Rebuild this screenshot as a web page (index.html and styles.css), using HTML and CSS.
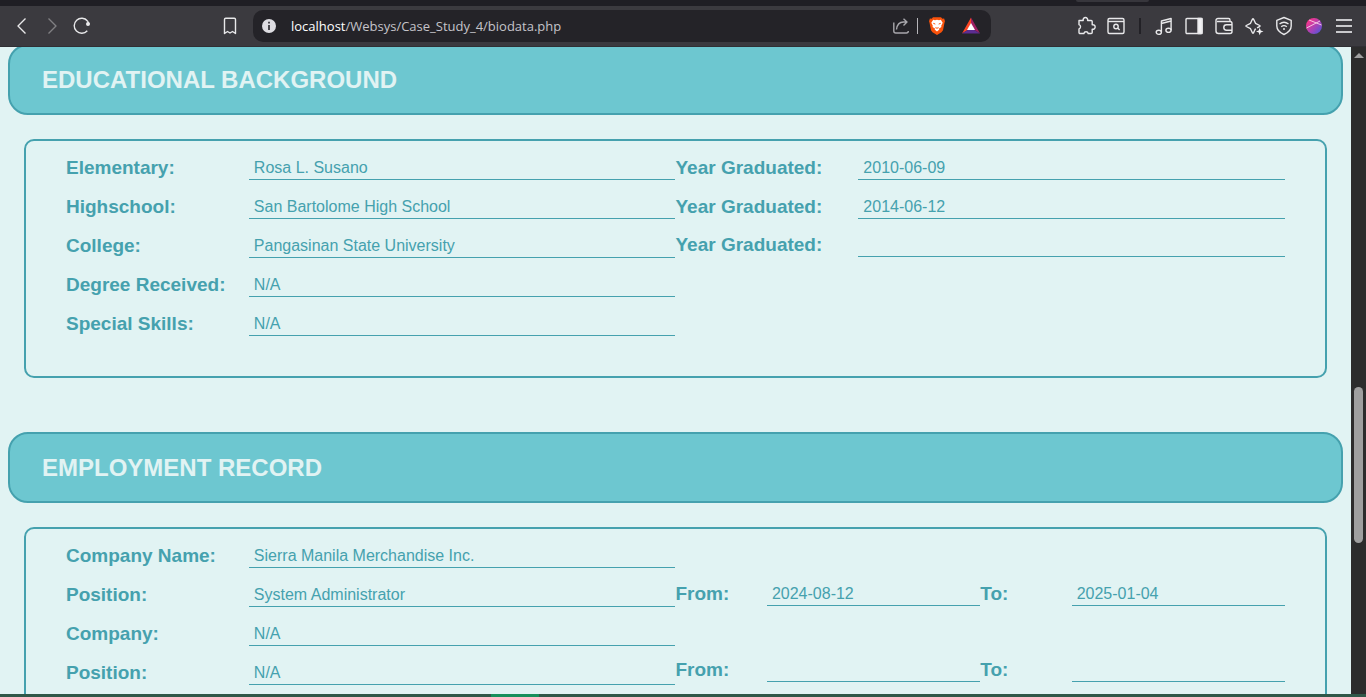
FILE: index.html
```html
<!DOCTYPE html>
<html lang="en">
<head>
<meta charset="utf-8">
<title>Biodata</title>
<link rel="stylesheet" href="styles.css">
</head>
<body>
<header class="browser">
  <div class="tab-strip"><div class="tab-edge"></div></div>
  <nav class="toolbar" aria-label="Browser toolbar">
    <button class="tool" aria-label="Back"><svg viewBox="0 0 20 20"><path d="M13.500 2.500 6 10l7.500 7.500"/></svg></button>
    <button class="tool tool-off" aria-label="Forward"><svg viewBox="0 0 20 20"><path d="M6.500 2.500 14 10l-7.500 7.500"/></svg></button>
    <button class="tool" aria-label="Reload"><svg viewBox="0 0 20 20"><path d="M15.300 14.800A7.500 7.500 0 1 1 15.500 5"/><circle class="solid" cx="16" cy="8" r="1.300"/><path d="M15.500 5 17 8"/></svg></button>
    <button class="tool bookmark" aria-label="Bookmark"><svg viewBox="0 0 20 20"><path d="M4.500 3.500a1.200 1.200 0 0 1 1.200-1.200h8.600a1.200 1.200 0 0 1 1.200 1.200V17.500L12.500 15.500 10 17l-2.500-1.500-3 2z"/></svg></button>
    <div class="address">
      <button class="site-info" aria-label="Site information"><svg viewBox="0 0 20 20"><circle class="info-disc" cx="10" cy="10" r="7"/><path class="info-mark" d="M10 9v5M10 5.800v1.800"/></svg></button>
      <div class="url" role="textbox" aria-label="Address" contenteditable="true" spellcheck="false"><span class="host">localhost</span>/Websys/Case_Study_4/biodata.php</div>
      <button class="address-tool" aria-label="Share"><svg viewBox="0 0 20 20"><path class="dim" d="M2.800 6.500V15a2 2 0 0 0 2 2h10.500a2 2 0 0 0 2-2"/><path class="dim" d="M5.500 13.500C6 9 8.500 6 12.500 6h3.500M12.500 2.800 16 6l-3.500 3.500"/></svg></button>
      <span class="address-rule"></span>
      <button class="address-tool shields" aria-label="Shields"><svg viewBox="0 0 20 20"><path class="lion" d="M6 1.200h8l1.400 1.500 1.700-.2.900 2.700-.5 1.500-1.500 7.500-1.500 2L10 19l-4.500-2.800-1.500-2-1.500-7.500L2 5.200l.9-2.700 1.700.2z"/><path class="lion-face" d="M6.200 3.800 8 4.300l2-.5 2 .5 1.800-.5 1.900 3-1.500 3 .2 1.200-2.200 1.500-.8-.2 1 1.300L10 15.500l-2.400-1.900 1-1.300-.8.200L5.600 11l.2-1.200-1.500-3z"/><path class="lion-line" d="m6.300 7.300 2 .8M13.700 7.300l-2 .8M8.500 11.500l1.500.8 1.500-.8"/></svg></button>
      <button class="address-tool rewards" aria-label="Rewards"><svg viewBox="0 0 20 20"><path fill="#ff4724" d="M10 1.500 1 17.500l6-3.800 3-5.200z"/><path fill="#9e1f63" d="m10 1.500 9 16-6-3.800-3-5.200z"/><path fill="#5d2d91" d="M1 17.500h18l-6-3.800H7z"/><path fill="#fff" d="m10 7-4 7h8z"/></svg></button>
    </div>
    <button class="tool" aria-label="Extensions"><svg viewBox="0 0 20 20"><path d="M3 4.500h4.200a2.300 2.300 0 1 1 4.400 0h3.600a1 1 0 0 1 1 1v3.300a2.300 2.300 0 1 1 0 4.400v3.300a1 1 0 0 1-1 1h-3a2.200 2.200 0 0 0-4.300 0H4a1 1 0 0 1-1-1v-3.600a2.200 2.200 0 0 0 0-4.200z"/></svg></button>
    <button class="tool" aria-label="Search in page"><svg viewBox="0 0 20 20"><rect x="2" y="2.500" width="16" height="15" rx="1.500"/><path d="M2 5.500h16"/><circle cx="10" cy="10.500" r="2.200"/><path d="m11.600 12.100 2 2"/></svg></button>
    <span class="tool-rule"></span>
    <button class="tool" aria-label="Media"><svg viewBox="0 0 20 20"><ellipse cx="4.800" cy="16.300" rx="2.600" ry="2.100"/><ellipse cx="14.500" cy="14.300" rx="2.600" ry="2.100"/><path d="M7.400 16V5l9.700-2.500v11.800M7.400 7.500 17 5"/></svg></button>
    <button class="tool" aria-label="Sidebar"><svg viewBox="0 0 20 20"><rect x="2" y="2.500" width="16" height="15" rx="1"/><path class="solid" d="M14 2.500H18v15h-4z"/></svg></button>
    <button class="tool" aria-label="Wallet"><svg viewBox="0 0 20 20"><path d="M16 5.500V4a1.500 1.500 0 0 0-1.500-1.500H4a2 2 0 0 0-2 2V15a2.500 2.500 0 0 0 2.500 2.500h11.500a2 2 0 0 0 2-2v-8a2 2 0 0 0-2-2H3M18 8.800h-5.500a2.700 2.700 0 0 0 0 5.400H18"/></svg></button>
    <button class="tool" aria-label="Assistant"><svg viewBox="0 0 20 20"><path d="m12 13.500-.8-.5L9.500 17q-.5.800-1 0l-2-4.300-4.200-2.200q-.8-.5 0-1l4.200-2.200 2-4.300q.5-.8 1 0l2 4.300 4.200 2.200q.8.500 0 1L13 11.800"/><path class="spark" d="m15.700 11.800 1 2.700 2.800 1-2.800 1-1 2.800-1-2.800-2.700-1 2.700-1z"/></svg></button>
    <button class="tool" aria-label="VPN"><svg viewBox="0 0 20 20"><path d="m10 1.500 7.200 2.800V10c0 4-2.700 6.500-7.200 8.500C5.500 16.500 2.800 14 2.800 10V4.300z"/><path d="M5.500 8c2.700-2 6.300-2 9 0M7.200 10.700c1.700-1.300 3.900-1.300 5.600 0M9 13h2"/></svg></button>
    <button class="tool" aria-label="Profile"><svg viewBox="0 0 20 20"><defs><linearGradient id="orb" x1="0" y1="0" x2="1" y2="1"><stop offset=".2" stop-color="#ee3690"/><stop offset=".6" stop-color="#a044bd"/><stop offset="1" stop-color="#3c5bdc"/></linearGradient></defs><circle class="orb" cx="10" cy="10" r="8" fill="url(#orb)"/><path class="orb-line" d="M2.500 12 16 5M5 4l12.500 5"/></svg></button>
    <button class="tool menu" aria-label="Menu"><svg viewBox="0 0 20 20"><path d="M2 4h16M2 10h16M2 16h16"/></svg></button>
  </nav>
</header>

<div class="viewport">
  <main class="page">
    <section>
      <h2 class="banner">EDUCATIONAL BACKGROUND</h2>
      <div class="panel">
        <div class="column">
          <div class="field"><label for="elementary">Elementary:</label><input id="elementary" value="Rosa L. Susano"></div>
          <div class="field"><label for="highschool">Highschool:</label><input id="highschool" value="San Bartolome High School"></div>
          <div class="field"><label for="college">College:</label><input id="college" value="Pangasinan State University"></div>
          <div class="field"><label for="degree">Degree Received:</label><input id="degree" value="N/A"></div>
          <div class="field"><label for="skills">Special Skills:</label><input id="skills" value="N/A"></div>
        </div>
        <div class="column years">
          <div class="field"><label for="elementary-year">Year Graduated:</label><input id="elementary-year" value="2010-06-09"></div>
          <div class="field"><label for="highschool-year">Year Graduated:</label><input id="highschool-year" value="2014-06-12"></div>
          <div class="field"><label for="college-year">Year Graduated:</label><input id="college-year"></div>
        </div>
      </div>
    </section>
    <section>
      <h2 class="banner">EMPLOYMENT RECORD</h2>
      <div class="panel">
        <div class="column">
          <div class="field"><label for="company-1">Company Name:</label><input id="company-1" value="Sierra Manila Merchandise Inc."></div>
          <div class="field"><label for="position-1">Position:</label><input id="position-1" value="System Administrator"></div>
          <div class="field"><label for="company-2">Company:</label><input id="company-2" value="N/A"></div>
          <div class="field"><label for="position-2">Position:</label><input id="position-2" value="N/A"></div>
        </div>
        <div class="column periods">
          <div class="period first-period">
            <div class="field"><label for="from-1">From:</label><input id="from-1" value="2024-08-12"></div>
            <div class="field"><label for="to-1">To:</label><input id="to-1" value="2025-01-04"></div>
          </div>
          <div class="period second-period">
            <div class="field"><label for="from-2">From:</label><input id="from-2"></div>
            <div class="field"><label for="to-2">To:</label><input id="to-2"></div>
          </div>
        </div>
      </div>
    </section>
  </main>
  <div class="scrollbar" aria-hidden="true">
    <div class="scroll-up"></div>
    <div class="scroll-space-above"></div>
    <div class="scroll-thumb"></div>
    <div class="scroll-space-below"></div>
  </div>
</div>
<footer class="taskbar"><div class="taskbar-active"></div></footer>
</body>
</html>
```

FILE: styles.css
```css
* { box-sizing: border-box; }

body {
  margin: 0;
  height: 100vh;
  display: flex;
  flex-direction: column;
  overflow: hidden;
  font-family: "Liberation Sans", Arial, sans-serif;
  color: #45a1ae;
  background: #e1f3f3;
}

button {
  padding: 0;
  border: 0;
  background: none;
  display: flex;
  align-items: center;
  justify-content: center;
}

/* Browser chrome */
.browser { flex: none; background: #3b3a3f; }
.tab-strip {
  height: 6px;
  padding-right: 217px;
  background: #1f1e24;
  display: flex;
  justify-content: flex-end;
}
.tab-edge {
  width: 73px;
  height: 2px;
  background: #37363c;
  border-radius: 0 0 6px 6px;
}
.toolbar {
  height: 41px;
  padding: 0 7px;
  display: flex;
  align-items: center;
  border-bottom: 1px solid #302f34;
}
.tool { flex: none; width: 30px; height: 30px; }
.tool-off { opacity: .4; }
.bookmark { margin: 0 8px 0 118px; }
svg {
  width: 20px;
  height: 20px;
  fill: none;
  stroke: #e8e8ea;
  stroke-width: 1.4;
  stroke-linejoin: round;
}
.solid { fill: #f2f2f4; }
.spark { fill: #f2f2f4; stroke: none; }
.menu svg { stroke: #c9c9cc; stroke-width: 2; }
.tool-rule {
  width: 2px;
  height: 16px;
  margin: 0 8px;
  background: #222126;
}
.address {
  flex: 1;
  height: 32px;
  margin-right: 80px;
  padding: 0 10px 0 6px;
  display: flex;
  align-items: center;
  background: #242328;
  border-radius: 10px;
}
.site-info { width: 20px; }
.info-disc { fill: #dedde2; stroke: none; }
.info-mark { stroke: #4a494e; stroke-width: 2; }
.url {
  flex: 1;
  margin-left: 12px;
  font-family: "Open Sans", "Noto Sans", sans-serif;
  font-size: 13px;
  line-height: 20px;
  white-space: nowrap;
  color: #c5c4ca;
}
.host { color: #fff; }
.address-tool { width: 20px; }
.dim { stroke: #a8a7ac; }
.address-rule {
  width: 1px;
  height: 16px;
  margin: 0 9px 0 6px;
  background: #b5b4b9;
}
.rewards { margin-left: 14px; }
.shields svg, .rewards svg { stroke: none; }
.lion { fill: #f9520b; }
.lion-face { fill: #fff; }
.lion-line { stroke: #f9520b; stroke-width: 1; }
.orb { stroke: none; }
.orb-line { stroke: #f5c4e2; stroke-width: 1; }

/* Page area */
.viewport {
  flex: 1;
  min-height: 0;
  display: flex;
  overflow: hidden;
}
.page {
  flex: 1;
  min-width: 0;
  margin-top: -3px;
  padding: 0 8px;
}
.banner {
  margin: 0 0 24px;
  padding: 20px 32px;
  font-size: 24px;
  line-height: 27px;
  color: #e1f3f3;
  background: #6dc7d0;
  border: 2px solid #45a1ae;
  border-radius: 20px;
}
.panel {
  margin: 0 16px 54px;
  padding: 0 40px 40px;
  display: grid;
  grid-template-columns: 1fr 1fr;
  border: 2px solid #45a1ae;
  border-radius: 10px;
}
.column {
  display: grid;
  grid-auto-rows: 39px;
  align-content: start;
}
.years { grid-template-rows: 39px 39px 38px; }
.periods { grid-template-rows: 39px 38px 38px 38px; }
.period { display: grid; grid-template-columns: 1fr 1fr; }
.first-period { grid-row: 2; }
.second-period { grid-row: 4; }
.field {
  display: grid;
  grid-template-columns: 30% 70%;
  align-items: end;
}
.field label {
  font-size: 19px;
  font-weight: bold;
  line-height: 24px;
  white-space: nowrap;
}
.field input {
  width: 100%;
  height: 24px;
  padding: 0 5px;
  font: 16px "Liberation Sans", Arial, sans-serif;
  color: inherit;
  background: none;
  border: 0;
  border-bottom: 1px solid #45a1ae;
  border-radius: 0;
  outline: 0;
}

/* Scrollbar */
.scrollbar {
  flex: none;
  width: 15px;
  display: flex;
  flex-direction: column;
  align-items: center;
  background: #2c2c2c;
}
.scroll-up {
  margin-top: 6px;
  border: 5px solid transparent;
  border-top: 0;
  border-bottom-color: #a0a0a0;
}
.scroll-space-above { flex: 329; }
.scroll-thumb {
  flex: 156;
  width: 9px;
  background: #9f9f9f;
  border-radius: 5px;
}
.scroll-space-below { flex: 151; }

/* Desktop bar edge */
.taskbar {
  flex: none;
  height: 3px;
  padding-left: 491px;
  background: #2f5748;
}
.taskbar-active { width: 48px; height: 3px; background: #168f5b; }
```
